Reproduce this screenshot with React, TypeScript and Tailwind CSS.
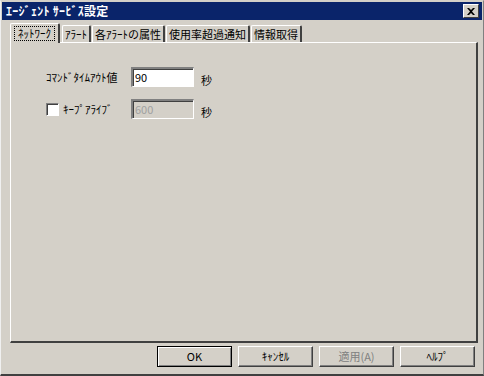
import React from "react";

const font = { fontFamily: '"MS UI Gothic","Noto Sans CJK JP","DejaVu Sans",sans-serif' };

function Tab({ label, selected }: { label: string; selected?: boolean }) {
  return (
    <div
      className={
        "relative flex items-center border-l border-t border-white border-r-2 border-r-[#404040] rounded-t-[2px] text-[11px] text-black " +
        (selected ? "h-[20px] -mb-[1px] z-10 bg-[#d4d0c8] -mx-[2px] px-[4px]" : "h-[17px] bg-[#d4d0c8] px-[2px]")
      }
    >
      <span className={selected ? "outline outline-1 outline-dotted outline-black px-[3px] leading-[13px]" : "leading-[13px]"}>{label}</span>
    </div>
  );
}

function Btn({ label, def, disabled }: { label: string; def?: boolean; disabled?: boolean }) {
  return (
    <div
      className={
        "w-[75px] h-[21px] flex items-center justify-center text-[11px] bg-[#d4d0c8] " +
        (def
          ? "border border-black shadow-[inset_1px_1px_0_#fff,inset_-1px_-1px_0_#808080]"
          : "border-l border-t border-white border-r border-b border-r-[#404040] border-b-[#404040] shadow-[inset_-1px_-1px_0_#808080]") +
        (disabled ? " text-[#808080]" : " text-black")
      }
    >
      {label}
    </div>
  );
}

export default function App() {
  return (
    <div className="w-[484px] h-[376px] bg-[#d4d0c8] flex flex-col border-l border-t border-l-[#f0f0f0] border-t-[#d4d0c8] border-b-2 border-b-[#404040] border-r border-r-[#808080]" style={font}>
      <div className="h-[18px] mx-[1px] mt-[1px] bg-[#0a246a] flex items-center justify-between pl-[4px] pr-[3px]">
        <span className="text-white text-[12px] font-bold leading-none tracking-[0.3px]">ｴｰｼﾞｪﾝﾄ ｻｰﾋﾞｽ設定</span>
        <div className="w-[16px] h-[14px] bg-[#d4d0c8] border-l border-t border-white border-r border-b border-r-[#404040] border-b-[#404040] flex items-center justify-center">
          <svg width="8" height="7" viewBox="0 0 8 7">
            <path d="M0 0h2l2 2 2-2h2L5 3.5 8 7H6L4 5 2 7H0l3-3.5z" fill="#000" />
          </svg>
        </div>
      </div>
      <div className="flex items-end pl-[11px] mt-[3px] h-[19px] gap-[1px]">
        <Tab label="ﾈｯﾄﾜｰｸ" selected />
        <div className="w-[2px]" />
        <Tab label="ｱﾗｰﾄ" />
        <Tab label="各ｱﾗｰﾄの属性" />
        <Tab label="使用率超過通知" />
        <Tab label="情報取得" />
      </div>
      <div className="ml-[9px] mr-[5px] h-[301px] border-l border-t border-white border-r-2 border-b-2 border-r-[#404040] border-b-[#404040] pl-[35px] pt-[24px] text-[11px] text-black">
        <div className="flex items-center h-[20px]">
          <span className="w-[85px]">ｺﾏﾝﾄﾞﾀｲﾑｱｳﾄ値</span>
          <div className="w-[63px] h-[20px] bg-white border-l-2 border-t-2 border-l-[#808080] border-t-[#808080] border-r border-b border-r-[#fff] border-b-[#fff] shadow-[inset_1px_1px_0_#404040] pl-[2px] flex items-center">90</div>
          <span className="ml-[7px] mt-[6px]">秒</span>
        </div>
        <div className="flex items-center h-[20px] mt-[12px]">
          <div className="w-[13px] h-[13px] bg-white border-l border-t border-[#808080] border-r border-b border-r-white border-b-white shadow-[inset_1px_1px_0_#404040]" />
          <span className="ml-[4px] w-[68px]">ｷｰﾌﾟｱﾗｲﾌﾞ</span>
          <div className="w-[63px] h-[20px] bg-[#d4d0c8] border-l-2 border-t-2 border-l-[#808080] border-t-[#808080] border-r border-b border-r-[#fff] border-b-[#fff] shadow-[inset_1px_1px_0_#404040] pl-[2px] flex items-center text-[#a0a0a0]">600</div>
          <span className="ml-[7px] mt-[6px]">秒</span>
        </div>
      </div>
      <div className="flex justify-end gap-[6px] mt-[3px] pr-[8px]">
        <Btn label="OK" def />
        <Btn label="ｷｬﾝｾﾙ" />
        <Btn label="適用(A)" disabled />
        <Btn label="ﾍﾙﾌﾟ" />
      </div>
    </div>
  );
}
